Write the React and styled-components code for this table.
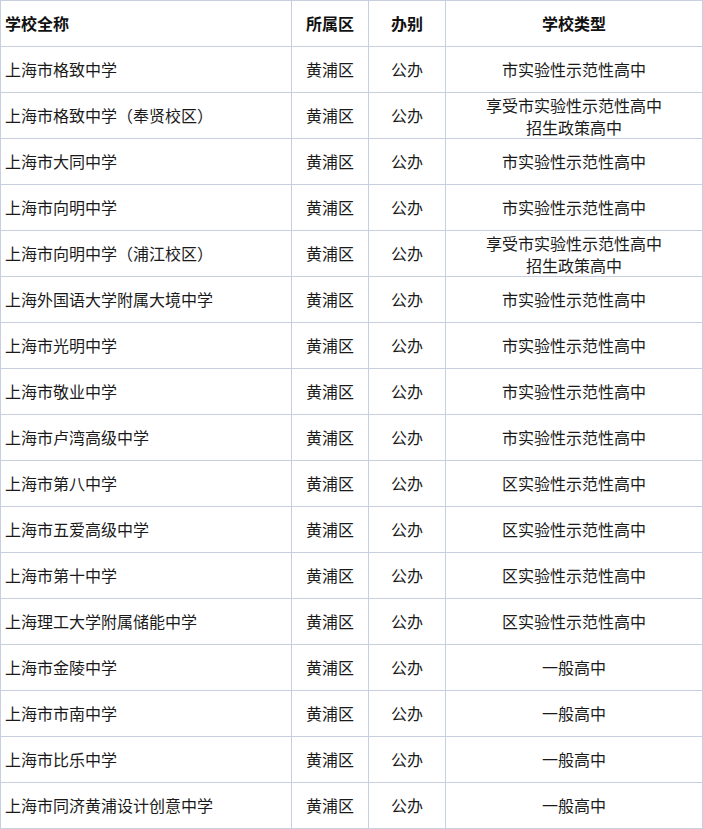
import React from 'react'
import styled, { createGlobalStyle } from 'styled-components'

const GlobalStyle = createGlobalStyle`
  body {
    margin: 0;
    background: #fff;
    font-family: "Noto Sans CJK SC", "Noto Sans", sans-serif;
    color: #1a1a1a;
  }
`

const BORDER = '#c8cfe0'

const Table = styled.table`
  width: 703px;
  border-collapse: collapse;
  table-layout: fixed;
  font-size: 16px;
`

const Row = styled.tr`
  height: 46px;
`

const HeadCell = styled.th`
  padding: 0 4px 2px;
  border: 1px solid ${BORDER};
  font-weight: bold;
  text-align: ${(p) => (p.$left ? 'left' : 'center')};
  line-height: 22px;
  color: #111;
`

const Cell = styled.td`
  padding: 0 4px ${(p) => (p.$multi ? '0' : '2px')};
  border: 1px solid ${BORDER};
  text-align: ${(p) => (p.$left ? 'left' : 'center')};
  line-height: 22px;
  vertical-align: middle;
`

const Line = styled.div`
  white-space: nowrap;
`

const rows = [
  ['上海市格致中学', '市实验性示范性高中'],
  ['上海市格致中学（奉贤校区）', ['享受市实验性示范性高中', '招生政策高中']],
  ['上海市大同中学', '市实验性示范性高中'],
  ['上海市向明中学', '市实验性示范性高中'],
  ['上海市向明中学（浦江校区）', ['享受市实验性示范性高中', '招生政策高中']],
  ['上海外国语大学附属大境中学', '市实验性示范性高中'],
  ['上海市光明中学', '市实验性示范性高中'],
  ['上海市敬业中学', '市实验性示范性高中'],
  ['上海市卢湾高级中学', '市实验性示范性高中'],
  ['上海市第八中学', '区实验性示范性高中'],
  ['上海市五爱高级中学', '区实验性示范性高中'],
  ['上海市第十中学', '区实验性示范性高中'],
  ['上海理工大学附属储能中学', '区实验性示范性高中'],
  ['上海市金陵中学', '一般高中'],
  ['上海市市南中学', '一般高中'],
  ['上海市比乐中学', '一般高中'],
  ['上海市同济黄浦设计创意中学', '一般高中'],
]

export default function App() {
  return (
    <>
      <GlobalStyle />
      <Table>
        <colgroup>
          <col style={{ width: 291 }} />
          <col style={{ width: 77 }} />
          <col style={{ width: 77 }} />
          <col />
        </colgroup>
        <thead>
          <Row>
            <HeadCell $left>学校全称</HeadCell>
            <HeadCell>所属区</HeadCell>
            <HeadCell>办别</HeadCell>
            <HeadCell>学校类型</HeadCell>
          </Row>
        </thead>
        <tbody>
          {rows.map(([name, type]) => {
            const multi = Array.isArray(type)
            return (
              <Row key={name}>
                <Cell $left>{name}</Cell>
                <Cell>黄浦区</Cell>
                <Cell>公办</Cell>
                <Cell $multi={multi}>
                  {multi ? type.map((t) => <Line key={t}>{t}</Line>) : type}
                </Cell>
              </Row>
            )
          })}
        </tbody>
      </Table>
    </>
  )
}
